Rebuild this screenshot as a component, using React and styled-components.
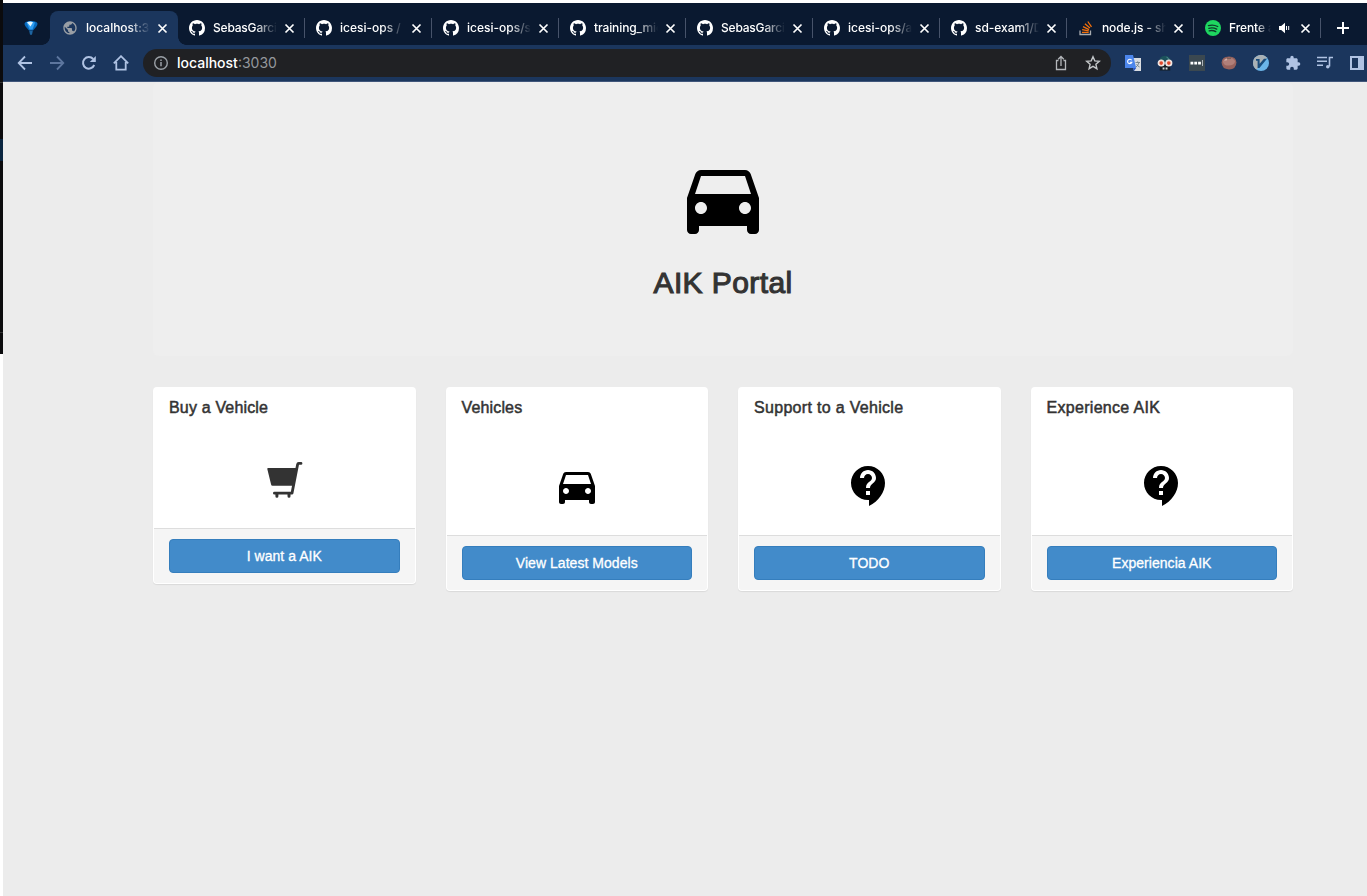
import React from 'react';
import styled, { createGlobalStyle, css } from 'styled-components';
import { MdDirectionsCar, MdContactSupport, MdExtension, MdPublic } from 'react-icons/md';

const Global = createGlobalStyle`
  * { box-sizing: border-box; }
  html, body, #root { margin: 0; height: 100%; }
  body { background: #fff; overflow: hidden; font-family: "Liberation Sans", Arial, sans-serif; color: #333; }
  svg { display: block; flex: none; }
`;

const Desktop = styled.div`
  display: grid;
  grid-template-columns: 3px 1fr;
  width: 1367px;
  height: 896px;
  overflow: hidden;
`;
const Backdrop = styled.div`
  height: 354px;
  background: #0b0b0d;
  padding-top: 82px;
`;
const BackdropRule = styled.div`
  height: 1px;
  background: #333;
  margin-bottom: ${(p) => p.$after || 0}px;
`;
const BackdropMark = styled.div`
  height: 22px;
  background: #0a2540;
  margin-bottom: 171px;
`;
const Window = styled.div`
  display: flex;
  flex-direction: column;
  margin-top: 3px;
  min-width: 0;
  background: #ececec;
`;
const TabStrip = styled.div`
  display: flex;
  align-items: flex-end;
  height: 42px;
  background: #0a1930;
  font-family: Inter, sans-serif;
`;
const PinnedTab = styled.div`
  width: 47px;
  height: 34px;
  display: flex;
  align-items: center;
  padding-left: 20px;
`;
const Tab = styled.div`
  position: relative;
  display: flex;
  align-items: center;
  width: 127px;
  height: 34px;
  padding-left: 12px;
  color: #fff;
  flex: none;
  ${(p) => p.$active && css`
    background: #1b365d;
    border-radius: 8px 8px 0 0;
    width: 128px;
    margin-right: -1px;
    &::before, &::after {
      content: "";
      position: absolute;
      bottom: 0;
      width: 8px;
      height: 8px;
    }
    &::before { left: -8px; background: radial-gradient(circle at 0 0, transparent 7.5px, #1b365d 8px); }
    &::after { right: -8px; background: radial-gradient(circle at 100% 0, transparent 7.5px, #1b365d 8px); }
  `}
`;
const Divider = styled.i`
  position: absolute;
  left: 0;
  top: 7px;
  width: 1px;
  height: 20px;
  background: #47536a;
`;
const TabTitle = styled.span`
  margin-left: 8px;
  width: ${(p) => (p.$short ? 42 : 64)}px;
  font-size: 12px;
  line-height: 16px;
  font-weight: 500;
  letter-spacing: ${(p) => p.$spacing || 0}px;
  white-space: nowrap;
  overflow: hidden;
  mask-image: linear-gradient(90deg, #000 66%, transparent 100%);
`;
const TabEnd = styled.span`
  display: flex;
  align-items: center;
  margin-left: auto;
  padding-right: ${(p) => (p.$active ? 10.5 : 9.5)}px;
  gap: 10px;
`;
const NewTab = styled(Tab)`
  width: 46px;
  padding-left: 15px;
`;
const Toolbar = styled.div`
  display: flex;
  align-items: center;
  height: 37px;
  background: #1b365d;
  border-bottom: 1px solid #40567a;
`;
const NavButtons = styled.div`
  display: flex;
  gap: 16px;
  width: 140px;
  padding-left: 14px;
`;
const Omnibox = styled.div`
  display: flex;
  align-items: center;
  width: 968px;
  height: 28px;
  border-radius: 14px;
  background: #202124;
  padding: 0 10px;
`;
const Address = styled.span`
  flex: 1;
  margin-left: 8px;
  font: 400 14px/20px Inter, sans-serif;
  color: #95989d;
  b { font-weight: 500; color: #fff; }
`;
const OmniActions = styled.div`
  display: flex;
  gap: 16px;
`;
const Extensions = styled.div`
  display: flex;
  gap: 16px;
  padding-left: 14px;
`;
const Page = styled.main`
  width: 1140px;
  margin-left: 150px;
`;
const Jumbotron = styled.header`
  display: flex;
  flex-direction: column;
  align-items: center;
  height: 274px;
  padding-top: 68px;
  margin-bottom: 31px;
  border-radius: 6px;
  background: #eeeeee;
`;
const Heading = styled.h1`
  margin: 20px 0 0;
  font-size: 30px;
  line-height: 33px;
  font-weight: 400;
  letter-spacing: 0.4px;
  -webkit-text-stroke: 1.1px #333;
`;
const Cards = styled.section`
  display: grid;
  grid-template-columns: repeat(4, 1fr);
  gap: 30px;
  align-items: start;
`;
const Card = styled.article`
  border: 1px solid transparent;
  border-radius: 4px;
  background: #fff;
  box-shadow: 0 1px 1px rgba(0, 0, 0, 0.08);
`;
const CardTitle = styled.h3`
  margin: 0;
  padding: 11px 15px 9px;
  font-size: 16px;
  line-height: 18px;
  font-weight: 400;
  letter-spacing: ${(p) => p.$spacing}px;
  -webkit-text-stroke: 0.5px #333;
`;
const CardBody = styled.div`
  display: flex;
  justify-content: center;
  height: ${(p) => p.$height}px;
  padding-top: 36px;
`;
const CardFooter = styled.footer`
  padding: 10px 15px;
  background: #f5f5f5;
  border-top: 1px solid #ddd;
  border-radius: 0 0 3px 3px;
`;
const Button = styled.button`
  display: block;
  width: 100%;
  height: 34px;
  padding: 0;
  border: 1px solid #357ebd;
  border-radius: 4px;
  background: #428bca;
  color: #fff;
  font: 14px/20px "Liberation Sans", Arial, sans-serif;
  letter-spacing: 0.04px;
  -webkit-text-stroke: 0.3px #fff;
`;

const Stroke = ({ d, color = '#b0c3e3', width = 1.8, size = 16 }) => (
  <svg width={size} height={size} viewBox="0 0 16 16" fill="none" stroke={color} strokeWidth={width}><path d={d} /></svg>
);
const Close = () => (
  <svg width="11" height="11" viewBox="0 0 11 11" stroke="#fff" strokeWidth="1.7"><path d="M1.5 1.5l8 8M9.5 1.5l-8 8" /></svg>
);
const Github = () => (
  <svg width="16" height="16" viewBox="0 0 16 16" fill="#fff"><path d="M8 0C3.58 0 0 3.58 0 8c0 3.54 2.29 6.53 5.47 7.59.4.07.55-.17.55-.38 0-.19-.01-.82-.01-1.49-2.01.37-2.53-.49-2.69-.94-.09-.23-.48-.94-.82-1.13-.28-.15-.68-.52-.01-.53.63-.01 1.08.58 1.23.82.72 1.21 1.87.87 2.33.66.07-.52.28-.87.51-1.07-1.78-.2-3.64-.89-3.64-3.95 0-.87.31-1.59.82-2.15-.08-.2-.36-1.02.08-2.12 0 0 .67-.21 2.2.82.64-.18 1.32-.27 2-.27s1.36.09 2 .27c1.53-1.04 2.2-.82 2.2-.82.44 1.1.16 1.92.08 2.12.51.56.82 1.27.82 2.15 0 3.07-1.87 3.75-3.65 3.95.29.25.54.73.54 1.48 0 1.07-.01 1.93-.01 2.2 0 .21.15.46.55.38A8.01 8.01 0 0 0 16 8c0-4.42-3.58-8-8-8z" /></svg>
);
const Balloon = () => (
  <svg width="16" height="16" viewBox="0 0 16 16">
    <path d="M1.5 3.8Q2 1 8 1t6.5 2.8Q14.5 6 10 10.5H6Q1.5 6 1.5 3.8z" fill="#0869bd" />
    <path d="M3.5 2.2Q8 .6 12 2.6L9.6 9.5h-3z" fill="#2d9cf0" />
    <path d="M4 2.3Q7 1 10 2.2L7.5 6.5z" fill="#e5f6ff" />
    <path d="M6.2 10.8h3.6L9 14.8H7z" fill="#1d64a0" />
  </svg>
);
const StackOverflow = () => (
  <svg width="16" height="16" viewBox="0 0 16 16" fill="none" strokeWidth="1.3">
    <path d="M2 10.5v4h10.5v-4" stroke="#a9acb0" />
    <path d="M4 12.3h6.7M4.1 9.7l6.6 1.2M5 6.7l6 2.9M6.9 3.8l5 4.2M9.8 1.5l3.7 5.3" stroke="#f4700c" />
  </svg>
);
const Spotify = () => (
  <svg width="16" height="16" viewBox="0 0 16 16">
    <circle cx="8" cy="8" r="8" fill="#1ed760" />
    <path d="M3.4 5.6q5-1.4 9.3.9M3.8 8.3q4.2-1.2 7.9.8M4.2 10.8q3.6-.9 6.6.8" fill="none" stroke="#0d3b2a" strokeWidth="1.3" strokeLinecap="round" />
  </svg>
);
const Speaker = () => (
  <svg width="11" height="12" viewBox="0 0 11 12" fill="#fff"><path d="M0 4h2.2L6 .8v10.4L2.2 8H0z" /><path d="M7.5 4v4M9.7 4v4" stroke="#fff" strokeWidth="1" /></svg>
);
const Info = () => (
  <svg width="16" height="16" viewBox="0 0 16 16" fill="none" stroke="#9aa0a6"><circle cx="8" cy="8" r="6.3" strokeWidth="1.4" /><path d="M8 7v4.2M8 4.4v1.5" strokeWidth="1.5" /></svg>
);
const Reload = () => (
  <svg width="16" height="16" viewBox="0 0 16 16"><path d="M13.2 10A5.8 5.8 0 1 1 12.2 4" fill="none" stroke="#b0c3e3" strokeWidth="2" /><path d="M14.8 1v6H8.8z" fill="#b0c3e3" /></svg>
);
const Translate = () => (
  <svg width="16" height="16" viewBox="0 0 16 16">
    <path d="M6 3h10v13H9z" fill="#d9dce0" /><path d="M0 0h8l3.2 13H0z" fill="#4c86ec" /><path d="M8 13h3.2L9 16z" fill="#2a56c6" />
    <path d="M6.7 5.3A2.2 2.2 0 1 0 6.9 7.2H4.8" fill="none" stroke="#fff" strokeWidth="1.1" />
    <path d="M10.5 7.5H15M12.7 6.3v1.2M14 7.5q-.8 3-3 4.5M11.6 9.2q1 2 3 2.8" fill="none" stroke="#718089" strokeWidth=".9" />
  </svg>
);
const Mask = () => (
  <svg width="16" height="16" viewBox="0 0 16 16">
    <path d="M2.5 6.5Q2 1.2 8 .8q6 .4 5.5 5.7z" fill="#1c525b" />
    <path d="M9.5 2.2q2 .6 2.6 2.6" fill="none" stroke="#4f8a90" />
    <path d="M3 9h10l.3 6.5H2.7z" fill="#141d24" />
    <circle cx="4.2" cy="8" r="3" fill="#f6d9cf" stroke="#f3e9e4" strokeWidth="1.2" />
    <circle cx="11.8" cy="8" r="3" fill="#f6d9cf" stroke="#f3e9e4" strokeWidth="1.2" />
    <circle cx="4.2" cy="8.1" r="1.8" fill="#e0492c" /><circle cx="11.8" cy="8.1" r="1.8" fill="#e0492c" />
    <path d="M5.6 12.4h1.9v2H5.6zM8.6 12.4h1.9v2H8.6z" fill="#d5dadb" />
  </svg>
);
const Dots = () => (
  <svg width="16" height="16" viewBox="0 0 16 16"><path d="M0 0h16v16H0z" fill="#3b4850" /><path d="M1.5 6.7h2.8v2.8H1.5zM5.3 6.7h2.8v2.8H5.3zM9.1 6.7h2.8v2.8H9.1z" fill="#fff" /><path d="M13.5 5v6" stroke="#aeb5bb" /></svg>
);
const Tomato = () => (
  <svg width="16" height="16" viewBox="0 0 16 16"><path d="M.6 7.6Q.8 1.6 8 1.6t7.4 6Q15.2 14.4 8 14.4.8 14.2.6 7.6z" fill="#96625d" /><path d="M1.8 6.4q2-3.6 6.2-3.6t6.2 3.4q-1 4.4-6.6 4.4-5 0-5.8-4.2z" fill="#b07f79" /><path d="M3 5.4q1.2-1.7 3.2-2l-.6 2.2z" fill="#d8b7b1" /><path d="M5.4 2.6l2.6.6 2.8-.6-1.8 1.6-1-.6-1 .6z" fill="#66584e" /></svg>
);
const Vimeo = () => (
  <svg width="16" height="16" viewBox="0 0 16 16"><circle cx="8" cy="8" r="8" fill="#6bb5e8" /><path d="M0 8a8 8 0 0 1 14-5.3L3.5 14.5A8 8 0 0 1 0 8z" fill="#a9b1b5" /><path d="M3 4h3.6v4.8L11 3.7h3L6.4 13H4.6V5.8H3z" fill="#194c7b" /></svg>
);
const Queue = () => (
  <svg width="16" height="16" viewBox="0 0 16 16" fill="none" stroke="#b0c3e3" strokeWidth="1.6"><path d="M0 2.5h10M0 6.3h10M0 10.2h6M12.5 11.5V2.5H16" /><circle cx="10.8" cy="11.7" r="1.8" fill="#b0c3e3" stroke="none" /></svg>
);
const Panel = () => (
  <svg width="16" height="16" viewBox="0 0 16 16"><path d="M1 1h14v14H1zM3 3v10h6V3z" fill="#b0c3e3" fillRule="evenodd" /></svg>
);
const CartIcon = styled.svg.attrs({ width: 36, height: 37, viewBox: '0 0 36 37', fill: '#333' })`
  margin-left: 1px;
`;
const Cart = () => (
  <CartIcon>
    <path d="M1 6h29l-4 17.8H5.5q-1.2 0-1.4-1.2L.3 7Q.2 6 1 6z" />
    <path d="M34 1.4h-2.3q-.9 0-1.1 1L25 31.2H7.4" fill="none" stroke="#333" strokeWidth="2.8" strokeLinecap="round" strokeLinejoin="round" />
    <path d="M8.4 32h3v2.3a1.5 1.5 0 0 1-3 0zM20.5 32h3v2.3a1.5 1.5 0 0 1-3 0z" />
  </CartIcon>
);

const tabs = [
  { title: 'localhost:3030', icon: <MdPublic size={16} color="#9a9fa5" />, active: true },
  { title: 'SebasGarcia', icon: <Github />, first: true, spacing: -0.2 },
  { title: 'icesi-ops / s', icon: <Github /> },
  { title: 'icesi-ops/sd', icon: <Github /> },
  { title: 'training_mic', icon: <Github />, spacing: -0.1 },
  { title: 'SebasGarcia', icon: <Github />, spacing: -0.2 },
  { title: 'icesi-ops/ai', icon: <Github /> },
  { title: 'sd-exam1/D', icon: <Github />, spacing: -0.05 },
  { title: 'node.js - sh', icon: <StackOverflow />, spacing: -0.1 },
  { title: 'Frente a', icon: <Spotify />, sound: true, spacing: -0.1 },
];

const cards = [
  { title: 'Buy a Vehicle', spacing: 0.17, action: 'I want a AIK', icon: <Cart />, height: 102 },
  { title: 'Vehicles', spacing: 0.15, action: 'View Latest Models', icon: <MdDirectionsCar size={48} color="#000" />, height: 109 },
  { title: 'Support to a Vehicle', spacing: 0.31, action: 'TODO', icon: <MdContactSupport size={48} color="#000" />, height: 109 },
  { title: 'Experience AIK', spacing: 0.3, action: 'Experiencia AIK', icon: <MdContactSupport size={48} color="#000" />, height: 109 },
];

export default function App() {
  return (
    <>
      <Global />
      <Desktop>
        <Backdrop>
          <BackdropRule $after={56} />
          <BackdropMark />
          <BackdropRule />
        </Backdrop>
        <Window>
          <TabStrip>
            <PinnedTab><Balloon /></PinnedTab>
            {tabs.map((t, i) => (
              <Tab key={i} $active={t.active}>
                {!t.active && !t.first && <Divider />}
                {t.icon}
                <TabTitle $short={t.sound} $spacing={t.spacing}>{t.title}</TabTitle>
                <TabEnd $active={t.active}>{t.sound && <Speaker />}<Close /></TabEnd>
              </Tab>
            ))}
            <NewTab><Divider /><Stroke d="M8 2v12M2 8h12" color="#fff" width={2} /></NewTab>
          </TabStrip>
          <Toolbar>
            <NavButtons>
              <Stroke d="M15 8H2M8 1.5L1.7 8 8 14.5" />
              <Stroke d="M1 8h13M8 1.5L14.3 8 8 14.5" color="#5d769e" />
              <Reload />
              <Stroke d="M.8 8.3L8 1.2l7.2 7.1M3.3 7v7.7h9.4V7" />
            </NavButtons>
            <Omnibox>
              <Info />
              <Address><b>localhost</b>:3030</Address>
              <OmniActions>
                <Stroke d="M5.5 5.5h-2v9h9v-9h-2M8 11V1.7M5.2 4.3L8 1.5l2.8 2.8" color="#b4b7bb" width={1.3} />
                <Stroke d="M8 1.8l1.8 4.1 4.5.4-3.4 3 1 4.4L8 11.4l-3.9 2.3 1-4.4-3.4-3 4.5-.4z" color="#c4c7c9" width={1.4} />
              </OmniActions>
            </Omnibox>
            <Extensions>
              <Translate /><Mask /><Dots /><Tomato /><Vimeo />
              <MdExtension size={16} color="#b0c3e3" />
              <Queue /><Panel />
            </Extensions>
          </Toolbar>
          <Page>
            <Jumbotron>
              <MdDirectionsCar size={96} color="#000" />
              <Heading>AIK Portal</Heading>
            </Jumbotron>
            <Cards>
              {cards.map((c) => (
                <Card key={c.title}>
                  <CardTitle $spacing={c.spacing}>{c.title}</CardTitle>
                  <CardBody $height={c.height}>{c.icon}</CardBody>
                  <CardFooter><Button>{c.action}</Button></CardFooter>
                </Card>
              ))}
            </Cards>
          </Page>
        </Window>
      </Desktop>
    </>
  );
}
